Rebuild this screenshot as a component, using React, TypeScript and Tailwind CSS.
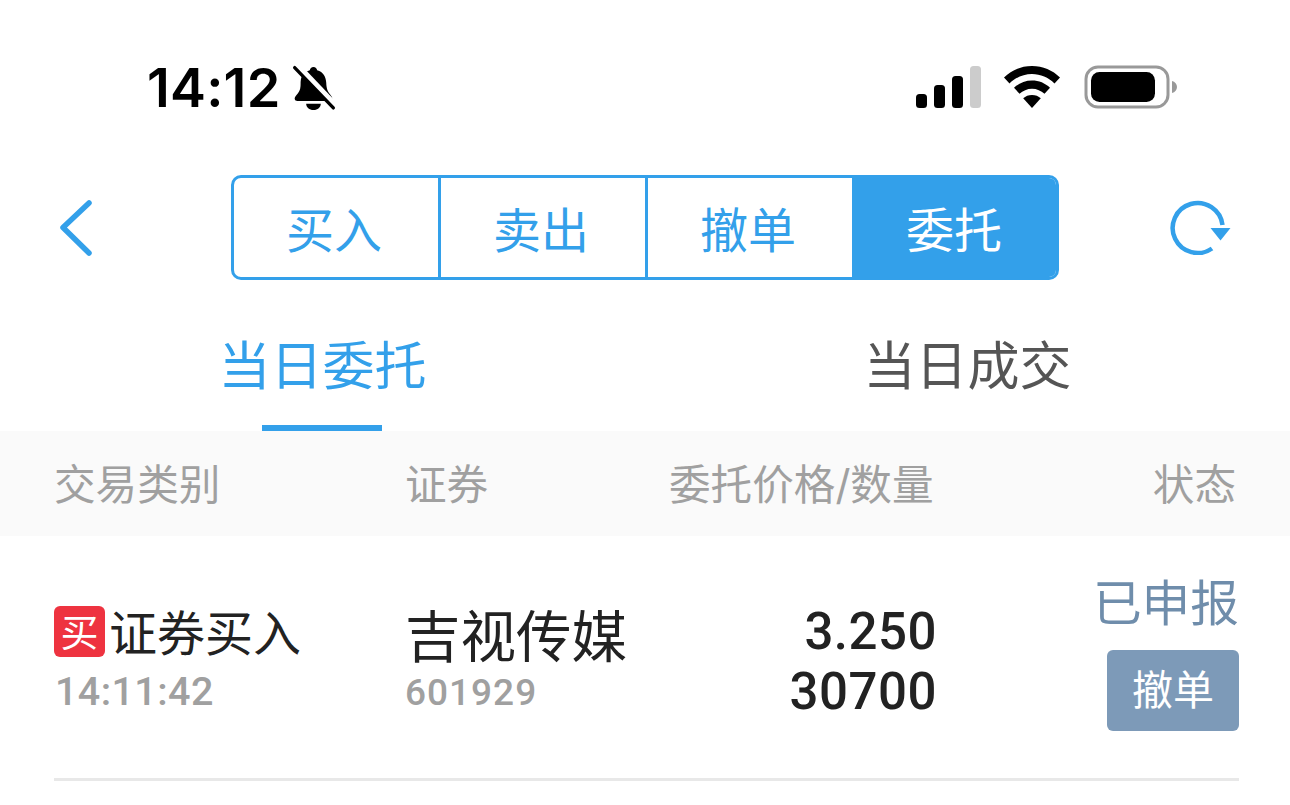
import React from 'react';

const cjk = "font-['Inter','Noto_Sans_CJK_SC',sans-serif]";
const segments = ['买入', '卖出', '撤单', '委托'];

const BellOff = () => (
  <svg width="44" height="46" viewBox="3 0 39 44" fill="none">
    <path d="M22 2c2 0 3.2 1.3 3.500 3 6 1.500 8.500 6.500 8.700 12 .2 6 1.600 8.600 3.600 11 1.200 1.600 2.200 3 2.200 4 0 1.600-1.200 2.400-2.800 2.400H6.800C5.200 34.400 4 33.600 4 32c0-1.400 1.400-3 2.800-4.600C8 26 8.800 24.500 9.300 22.500 10 19 9.500 17 9.800 15c.6-5 3.600-8.500 8.700-10C18.800 3.300 20 2 22 2Z" fill="#000" />
    <path d="M15 37h14c0 3.500-3 6-7 6s-7-2.500-7-6Z" fill="#000" />
    <path d="M6 0l38 40" stroke="#fff" strokeWidth="6" />
    <path d="M4 2.500l37 38.500" stroke="#000" strokeWidth="3.200" strokeLinecap="round" />
  </svg>
);

const StatusIcons = () => (
  <div className="flex items-center">
    <svg width="66" height="42" viewBox="0 0 66 42">
      <rect x="0" y="28" width="11" height="14" rx="3.500" fill="#000" />
      <rect x="18" y="19" width="11" height="23" rx="3.500" fill="#000" />
      <rect x="36" y="10" width="11" height="32" rx="3.500" fill="#000" />
      <rect x="54" y="0" width="11" height="42" rx="3.500" fill="#ccc" />
    </svg>
    <svg className="ml-[21px]" width="58" height="42" viewBox="0 0 58 42">
      <path d="M29 0C18 0 8.500 4.200 1 11.500l5.500 6C12.500 11.500 20.500 8 29 8s16.500 3.500 22.500 9.500l5.500-6C49.500 4.200 40 0 29 0Z" fill="#000" />
      <path d="M29 14.500c-7 0-13 2.600-18 7.200l5.500 6c3.400-3 7.700-5 12.500-5s9.100 2 12.500 5l5.500-6c-5-4.600-11-7.200-18-7.200Z" fill="#000" />
      <path d="M29 29c-3.500 0-6.500 1.200-8.800 3.300L29 42l8.800-9.700C35.500 30.200 32.500 29 29 29Z" fill="#000" />
    </svg>
    <svg className="ml-[23px]" width="94" height="44" viewBox="0 0 94 44">
      <rect x="2" y="2" width="82" height="40" rx="12" fill="none" stroke="#999" strokeWidth="3" />
      <rect x="7" y="7" width="64" height="30" rx="8.500" fill="#000" />
      <path d="M88 16c3 .8 5 3 5 6s-2 5.200-5 6Z" fill="#999" />
    </svg>
  </div>
);

const App: React.FC = () => {
  return (
    <div className={`h-[805px] w-[1290px] overflow-hidden bg-white ${cjk}`}>
      {/* Status bar */}
      <div className="flex h-[175px] items-start justify-between pl-[147px] pr-[112px] pt-[63px]">
        <div className="flex h-[50px] items-center">
          <span className="text-[54px] font-semibold leading-[50px] tracking-[0.2px] text-black">14:12</span>
          <span className="ml-[11px]"><BellOff /></span>
        </div>
        <div className="pt-[2px]"><StatusIcons /></div>
      </div>

      {/* Nav */}
      <div className="flex h-[105px] items-center pl-[58px]">
        <svg width="36" height="58" viewBox="0 0 36 58" fill="none">
          <path d="M31 4L5 28.500 31 54" stroke="#33a0ea" strokeWidth="5.500" strokeLinecap="round" strokeLinejoin="round" />
        </svg>
        <div className="ml-[137px] flex h-[105px] w-[828px] overflow-hidden rounded-[10px] border-[3px] border-[#33a0ea]">
          {segments.map((label, i) => (
            <div
              key={label}
              className={`flex flex-1 items-center justify-center pt-[6px] text-[48px] ${
                i === 3 ? 'bg-[#33a0ea] text-white' : 'text-[#33a0ea]'
              } ${i < 2 ? 'border-r-[3px] border-[#33a0ea]' : ''}`}
            >
              <span className={i === 3 ? '' : 'pr-[4px]'}>{label}</span>
            </div>
          ))}
        </div>
        <svg className="ml-[110px] -mt-[2px]" width="62" height="56" viewBox="0 0 62 56" fill="none">
          <path d="M43 49.500A25 25 0 1 1 53.500 26" stroke="#33a0ea" strokeWidth="4.500" />
          <path d="M41.500 29h20L51.500 41.500Z" fill="#33a0ea" />
        </svg>
      </div>

      {/* Tabs */}
      <div className="flex h-[151px] pt-[55px]">
        <div className="flex flex-1 justify-center">
          <div className="flex flex-col items-center">
            <span className="text-[52px] leading-[64px] text-[#33a0ea]">当日委托</span>
            <div className="mt-[26px] h-[6px] w-[120px] bg-[#33a0ea]" />
          </div>
        </div>
        <div className="flex flex-1 justify-center">
          <span className="text-[52px] leading-[64px] text-[#555]">当日成交</span>
        </div>
      </div>

      {/* Table head */}
      <div className="flex h-[105px] items-center bg-[#fafafa] pl-[54px] pr-[54px] pt-[3px] text-[41.600px] text-[#a0a0a0]">
        <span className="w-[351px]">交易类别</span>
        <span className="w-[264px]">证券</span>
        <span className="whitespace-nowrap">委托价格/数量</span>
        <span className="flex-1 text-right">状态</span>
      </div>

      {/* Order row */}
      <div className="ml-[54px] mr-[51px] flex h-[245px] items-start border-b-[3px] border-[#e8e8e8]">
        <div className="w-[351px] pt-[70px]">
          <div className="flex items-start">
            <span className="flex h-[51px] w-[51px] items-center justify-center rounded-[6px] bg-[#ee3340] text-[38px] leading-none text-white">买</span>
            <span className="ml-[4px] pt-[2px] text-[48px] leading-[52px] text-[#222]">证券买入</span>
          </div>
          <div className="mt-[10px] pl-[1px] font-['Roboto',sans-serif] text-[39.500px] font-medium leading-[44px] tracking-[0.400px] text-[#a0a0a0]">14:11:42</div>
        </div>
        <div className="w-[210px] pt-[68px]">
          <div className="whitespace-nowrap text-[55.500px] leading-[66px] text-[#222]">吉视传媒</div>
          <div className="mt-[2px] font-['Roboto',sans-serif] text-[37px] font-medium leading-[42px] tracking-[1px] text-[#a0a0a0]">601929</div>
        </div>
        <div className="w-[322px] pt-[66px] text-right font-['Roboto',sans-serif] text-[51px] font-medium leading-[60px] tracking-[0.500px] text-[#222]">
          <div>3.250</div>
          <div>30700</div>
        </div>
        <div className="flex flex-1 flex-col items-end pt-[38px]">
          <span className="whitespace-nowrap text-[48.700px] leading-[60px] text-[#6f8dab]">已申报</span>
          <button className="mt-[16px] flex h-[81px] w-[132px] items-center justify-center rounded-[6px] bg-[#7d9ab8] text-[41px] text-white">撤单</button>
        </div>
      </div>
    </div>
  );
};

export default App;
